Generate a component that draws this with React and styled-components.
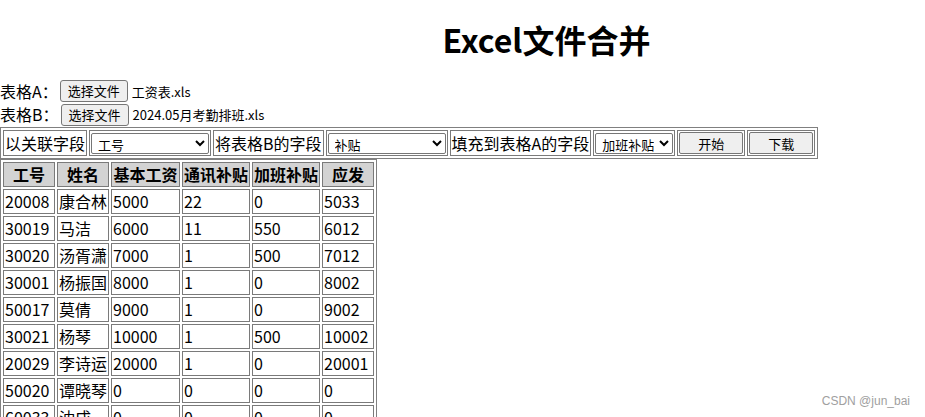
import React from "react";
import styled, { createGlobalStyle } from "styled-components";

const Global = createGlobalStyle`
  html, body { margin: 0; padding: 0; background: #fff; }
  body {
    font-family: "Microsoft YaHei", "Noto Sans CJK SC", "Noto Sans", sans-serif;
    font-size: 16px;
    color: #000;
  }
`;

const Page = styled.div`
  position: relative;
  width: 925px;
  height: 417px;
  overflow: hidden;
`;

const Title = styled.h1`
  margin: 18px 0 19px;
  padding-left: 168px;
  text-align: center;
  font-size: 32px;
  line-height: 42px;
  font-weight: 700;
`;

const FileRow = styled.div`
  display: flex;
  align-items: center;
  height: ${(p) => p.$h}px;
  line-height: 21px;
`;

const Label = styled.span`
  white-space: nowrap;
`;

const FileButton = styled.button`
  margin-left: 2px;
  height: 22px;
  padding: 0 7px;
  font-family: inherit;
  font-size: 13px;
  line-height: 18px;
  background: #efefef;
  border: 1px solid #767676;
  border-radius: 3px;
  color: #000;
`;

const FileName = styled.span`
  margin-left: 4px;
  font-size: 13px;
`;

const Grid = styled.table`
  border: 1px solid #808080;
  border-spacing: 2px;
  border-collapse: separate;
  margin: ${(p) => p.$m};
  font-size: 16px;
  line-height: 21px;
`;

const Cell = styled.td`
  border: 1px solid #7a7a7a;
  padding: 1px;
  white-space: nowrap;
  text-align: left;
  vertical-align: middle;
  width: ${(p) => (p.$w ? p.$w + "px" : "auto")};
  box-sizing: border-box;
`;

const Head = styled.th`
  border: 1px solid #7a7a7a;
  padding: 1px;
  white-space: nowrap;
  background: #d3d3d3;
  font-weight: 700;
  text-align: center;
  width: ${(p) => p.$w}px;
  box-sizing: border-box;
`;

const Select = styled.select`
  width: ${(p) => p.$w}px;
  height: 21px;
  font-family: inherit;
  font-size: 13px;
  padding: 0 2px;
  border: 1px solid #767676;
  border-radius: 2px;
  background: #fff;
  color: #000;
  display: block;
`;

const ActButton = styled.button`
  width: 64px;
  height: 22px;
  padding: 0;
  font-family: inherit;
  font-size: 13px;
  background: #efefef;
  border: 1px solid #767676;
  border-radius: 2px;
  color: #000;
  display: block;
`;

const Watermark = styled.div`
  position: absolute;
  right: 15px;
  bottom: 9px;
  font-family: "Liberation Sans", Arial, sans-serif;
  font-size: 12px;
  color: #a0a0a0;
`;

const cols = [
  ["工号", 52],
  ["姓名", 52],
  ["基本工资", 69],
  ["通讯补贴", 68],
  ["加班补贴", 68],
  ["应发", 52],
];

const rows = [
  ["20008", "康合林", "5000", "22", "0", "5033"],
  ["30019", "马洁", "6000", "11", "550", "6012"],
  ["30020", "汤胥潇", "7000", "1", "500", "7012"],
  ["30001", "杨振国", "8000", "1", "0", "8002"],
  ["50017", "莫倩", "9000", "1", "0", "9002"],
  ["30021", "杨琴", "10000", "1", "500", "10002"],
  ["20029", "李诗运", "20000", "1", "0", "20001"],
  ["50020", "谭晓琴", "0", "0", "0", "0"],
  ["60033", "沈成", "0", "0", "0", "0"],
];

export default function App() {
  return (
    <Page>
      <Global />
      <Title>Excel文件合并</Title>
      <FileRow $h={24}>
        <Label>表格A：</Label>
        <FileButton>选择文件</FileButton>
        <FileName>工资表.xls</FileName>
      </FileRow>
      <FileRow $h={23}>
        <Label>表格B：</Label>
        <FileButton>选择文件</FileButton>
        <FileName>2024.05月考勤排班.xls</FileName>
      </FileRow>
      <Grid $m="1px 0 0 0">
        <tbody>
          <tr>
            <Cell>以关联字段</Cell>
            <Cell>
              <Select $w={118} defaultValue="工号">
                <option>工号</option>
                <option>姓名</option>
              </Select>
            </Cell>
            <Cell>将表格B的字段</Cell>
            <Cell>
              <Select $w={118} defaultValue="补贴">
                <option>补贴</option>
              </Select>
            </Cell>
            <Cell>填充到表格A的字段</Cell>
            <Cell>
              <Select $w={78} defaultValue="加班补贴">
                <option>加班补贴</option>
              </Select>
            </Cell>
            <Cell>
              <ActButton>开始</ActButton>
            </Cell>
            <Cell>
              <ActButton>下载</ActButton>
            </Cell>
          </tr>
        </tbody>
      </Grid>
      <Grid $m="0">
        <thead>
          <tr>
            {cols.map(([t, w]) => (
              <Head key={t} $w={w}>
                {t}
              </Head>
            ))}
          </tr>
        </thead>
        <tbody>
          {rows.map((r) => (
            <tr key={r[0]}>
              {r.map((v, i) => (
                <Cell key={i} $w={cols[i][1]}>
                  {v}
                </Cell>
              ))}
            </tr>
          ))}
        </tbody>
      </Grid>
      <Watermark>CSDN @jun_bai</Watermark>
    </Page>
  );
}
